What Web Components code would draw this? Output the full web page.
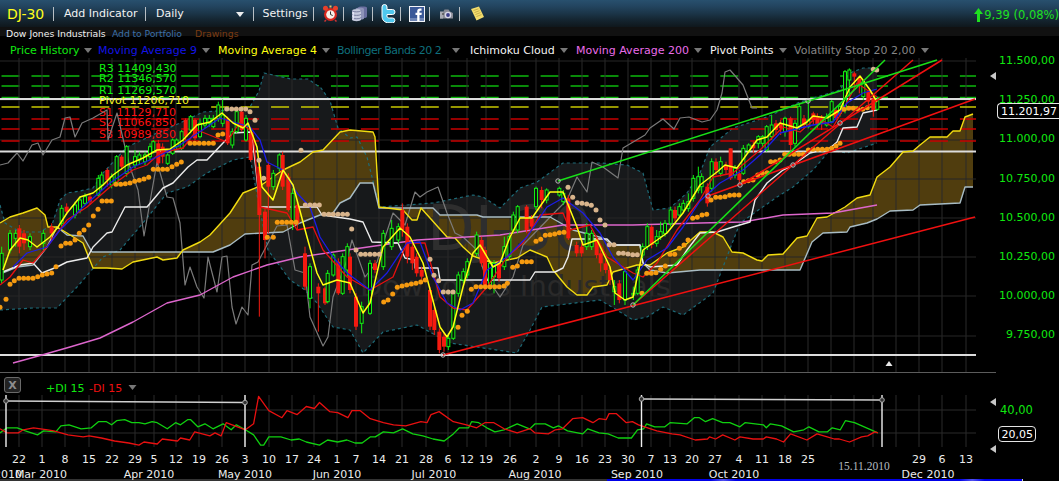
<!DOCTYPE html>
<html>
<head>
<meta charset="utf-8">
<title>DJ-30</title>
<style>
  html, body { margin: 0; padding: 0; background: #000; overflow: hidden; }
  body { font-family: "DejaVu Sans", sans-serif; font-size: 11px; }
</style>
</head>
<body>
<chart-app></chart-app>

<script>
const FONT = '"DejaVu Sans", sans-serif';

// svg helpers, all coordinates are page pixels
const pts = a => a.map(p => p.join(',')).join(' ');
const line = (a, color, w = 1.2, extra = '') =>
  `<polyline points="${pts(a)}" fill="none" stroke="${color}" stroke-width="${w}" stroke-linejoin="round" ${extra}/>`;
const seg = (x1, y1, x2, y2, color, w = 1, extra = '') =>
  `<line x1="${x1}" y1="${y1}" x2="${x2}" y2="${y2}" stroke="${color}" stroke-width="${w}" ${extra}/>`;
const label = (x, y, s, color, extra = '') =>
  `<text x="${x}" y="${y}" fill="${color}" ${extra}>${s}</text>`;

class ToolItem extends HTMLElement {
  connectedCallback() {
    this.attachShadow({ mode: 'open' });
    const w = this.getAttribute('w');
    const pad = this.getAttribute('pad');
    const last = this.hasAttribute('last');
    this.shadowRoot.innerHTML = `
      <style>
        :host {
          display: flex; align-items: center; box-sizing: border-box; height: 14px;
          width: ${w}px; flex: none; white-space: nowrap;
          ${pad ? `padding-left: ${pad}px;` : 'justify-content: center; padding-left: 4px;'}
          ${last ? '' : 'border-right: 1px solid #b8bfc4;'}
        }
      </style>
      <slot></slot>`;
  }
}

class ChartToolbar extends HTMLElement {
  connectedCallback() {
    this.attachShadow({ mode: 'open' });
    this.shadowRoot.innerHTML = `
      <style>
        :host {
          display: flex; align-items: center; height: 27px; box-sizing: border-box;
          background: linear-gradient(#28506e 0, #234560 22%, #1b3548 50%, #14242f 75%, #0f171c 100%);
          color: #f2f2f2; font: 11px ${FONT};
        }
        .sym { color: #ffff1a; font-size: 14px; }
        .tri { width: 0; height: 0; border: 4px solid transparent; border-top: 5px solid #eee; border-bottom: 0; margin-left: 52px; margin-top: 1px; }
        .change { margin-left: auto; display: flex; align-items: center; gap: 1px; color: #1fe01f; font-size: 11.5px; white-space: nowrap; padding-top: 2px; }
        svg { display: block; }
      </style>
      <tool-item w="54" pad="7"><span class="sym">DJ-30</span></tool-item>
      <tool-item w="92" pad="10">Add Indicator</tool-item>
      <tool-item w="107.5" pad="10">Daily<span class="tri"></span></tool-item>
      <tool-item w="60.5" pad="9">Settings</tool-item>
      <tool-item w="30">
        <svg width="17" height="17" viewBox="0 0 17 17">
          <path d="M4 15l-1.500 1.500M13 15l1.500 1.500" stroke="#c33" stroke-width="1.500"/>
          <circle cx="8.500" cy="9.500" r="6.500" fill="#d8261c"/>
          <circle cx="8.500" cy="9.500" r="4.300" fill="#f4f1e8"/>
          <path d="M8.500 6.500v3l2.200 1" fill="none" stroke="#333" stroke-width="1"/>
          <circle cx="3.500" cy="3.300" r="2.500" fill="#e8402a"/><circle cx="13.500" cy="3.300" r="2.500" fill="#e8402a"/>
          <rect x="7.500" y="0.500" width="2" height="2" fill="#e9c86a"/>
        </svg>
      </tool-item>
      <tool-item w="28.5">
        <svg width="17" height="17" viewBox="0 0 17 17">
          <path d="M7 2.500c0-1.500 9-1.500 9 0v9c0 1.200-2 1.500-3 1.500z" fill="#6a6fa0"/>
          <path d="M4.500 3.800c0-1.500 8.500-1.500 8.500 0v9.500c0 1.200-3 1.500-5 1.500z" fill="#8d93b8"/>
          <path d="M1 5.500c0-1.800 9-1.800 9 0v9.300c0 1.800-9 1.800-9 0z" fill="#c5cadd"/>
          <path d="M1 5.500c0 1.800 9 1.800 9 0M1 9c0 1.800 9 1.800 9 0M1 12.400c0 1.800 9 1.800 9 0" fill="none" stroke="#61668c" stroke-width=".8"/>
          <path d="M2.200 7v7.500" stroke="#eef" stroke-width="1"/>
        </svg>
      </tool-item>
      <tool-item w="28.500">
        <svg width="15" height="19" viewBox="0 0 15 19">
          <path d="M1 3a2.500 2.500 0 0 1 5 0v2.500h5.500a2.500 2.500 0 0 1 0 5H6V12c0 1.500 1 2 2.500 2h3a2.400 2.400 0 0 1 0 4.800H8C3.500 18.800 1 16 1 12z" fill="#4fc8ee" stroke="#fff" stroke-width="1"/>
        </svg>
      </tool-item>
      <tool-item w="29">
        <svg width="16" height="16" viewBox="0 0 16 16">
          <rect x=".5" y=".5" width="15" height="15" fill="#3b5998" stroke="#f2f4f8"/>
          <rect x="1" y="12" width="14" height="3" fill="#6d84b4"/>
          <path d="M8.200 15V9H6.500V6.800h1.700V5.300C8.200 3.400 9.300 2.600 11 2.600h1.500v2.200h-1c-.8 0-1 .3-1 1v1h2.300L12.500 9h-2v6z" fill="#fff"/>
        </svg>
      </tool-item>
      <tool-item w="30">
        <svg width="15" height="12" viewBox="0 0 15 12">
          <path d="M1 4h3l1.500-2.500h4L11 3.500 14 5v5.500H1z" fill="#8a8c96"/>
          <rect x="1" y="3.500" width="3" height="7" fill="#a8aab2"/>
          <circle cx="9" cy="7" r="3.300" fill="#d8d8e8"/><circle cx="9" cy="7" r="1.900" fill="#3c3e88"/>
          <circle cx="4" cy="6" r="1" fill="#555"/>
        </svg>
      </tool-item>
      <tool-item w="30" last>
        <svg width="15" height="15" viewBox="0 0 15 15">
          <path d="M1 3l8-2.500 5 10.500-7.500 3.500z" fill="#f3dc6c"/>
          <path d="M3.500 4.500l5-1.700M4.500 6.500l5-1.800M5.500 8.500l5-1.900M6.500 10.500l5-1.900" stroke="#b09a3c" stroke-width=".7"/>
        </svg>
      </tool-item>
      <span class="change">
        <svg width="9" height="14" viewBox="0 0 9 14"><path d="M4.500 0L9 6H6v8H3V6H0z" fill="#1fe01f"/></svg>
        9,39 (0,08%)
      </span>`;
  }
}

class ChartSubbar extends HTMLElement {
  connectedCallback() {
    this.attachShadow({ mode: 'open' });
    this.shadowRoot.innerHTML = `
      <style>
        :host {
          display: flex; align-items: center; height: 9px; box-sizing: border-box;
          padding: 4px 0 0 6px; background: #111; font: 9.3px ${FONT}; white-space: nowrap;
        }
        .name { color: #f0f0f0; width: 106px; flex: none; }
        .add { color: #3a6fa8; width: 83px; flex: none; letter-spacing: -.1px; }
        .draw { color: #7c3c12; }
      </style>
      <span class="name">Dow Jones Industrials</span>
      <span class="add">Add to Portfolio</span>
      <span class="draw">Drawings</span>`;
  }
}

class LegendItem extends HTMLElement {
  connectedCallback() {
    this.attachShadow({ mode: 'open' });
    const color = this.getAttribute('color');
    this.shadowRoot.innerHTML = `
      <style>
        :host {
          display: flex; align-items: center; gap: var(--gap, 5px); flex: none; box-sizing: border-box;
          width: ${this.getAttribute('w')}px; color: ${color}; white-space: nowrap;
        }
        i { width: 0; height: 0; border: 4px solid transparent; border-top: 5px solid #777; border-bottom: 0; }
      </style>
      <slot></slot><i></i>`;
  }
}

class ChartLegend extends HTMLElement {
  connectedCallback() {
    this.attachShadow({ mode: 'open' });
    this.shadowRoot.innerHTML = `
      <style>
        :host {
          display: flex; align-items: center; height: 22px; box-sizing: border-box;
          padding: 6px 0 0 10px; background: #000; font: 11px ${FONT};
        }
      </style>
      <slot></slot>`;
  }
}

// trace of the price panel
const UPPER = [[0,205],[5,223],[20,232],[40,232],[52,225],[60,200],[67,193],[80,191],[93,188],[103,173],[127,147],[157,133],[180,123],[203,112],[230,110],[250,107],[259,91],[264,73],[291,79],[308,79],[321,88],[330,101],[338,128],[350,138],[357,137],[367,157],[377,197],[380,207],[433,203],[473,195],[483,197],[500,208],[520,188],[537,182],[563,163],[573,163],[600,163],[627,165],[643,173],[653,210],[670,208],[687,193],[700,173],[710,147],[733,128],[767,117],[800,102],[840,90],[850,73],[863,68],[877,68]];
const LOWER = [[0,310],[33,308],[57,308],[77,287],[103,257],[120,250],[143,223],[167,193],[187,187],[207,173],[233,160],[250,157],[258,200],[268,250],[290,280],[305,290],[317,303],[333,327],[350,330],[363,353],[383,332],[417,325],[450,343],[517,353],[530,330],[542,307],[600,300],[617,310],[633,320],[647,317],[663,307],[683,315],[713,293],[723,267],[740,223],[777,197],[793,187],[813,170],[830,150],[847,153],[877,143]];
const SPAN_A = [[0,223],[10,217],[23,213],[37,208],[45,215],[48,227],[57,227],[67,233],[83,243],[93,268],[107,268],[122,269],[133,262],[157,257],[163,260],[177,258],[183,250],[200,242],[210,235],[230,213],[243,193],[260,186],[283,170],[300,162],[313,152],[323,150],[340,132],[350,130],[373,132],[375,137],[379,207],[403,210],[412,220],[417,220],[421,208],[430,218],[447,237],[455,238],[463,247],[473,256],[493,263],[517,258],[530,250],[547,257],[553,270],[567,287],[577,295],[587,295],[593,287],[607,285],[613,272],[637,265],[650,265],[667,253],[683,247],[700,232],[713,232],[723,237],[732,252],[743,253],[757,260],[762,261],[768,255],[783,254],[797,238],[807,236],[817,218],[827,217],[845,207],[857,198],[870,195],[877,177],[890,167],[903,152],[913,151],[920,145],[930,137],[947,137],[953,131],[960,131],[965,117],[973,114]];
const SPAN_B = [[0,274],[17,267],[33,265],[47,247],[57,227],[67,235],[83,236],[92,252],[213,252],[230,245],[245,234],[283,232],[300,223],[320,215],[333,213],[340,203],[350,198],[360,183],[373,183],[379,208],[433,208],[440,215],[477,215],[483,217],[550,217],[573,230],[603,238],[613,245],[640,245],[643,263],[650,270],[667,273],[700,270],[800,270],[812,242],[823,233],[847,232],[850,227],[867,223],[877,219],[890,211],[913,210],[920,205],[960,203],[965,187],[973,187]];
const WHITE = [[0,273],[20,265],[33,263],[42,273],[57,267],[67,262],[87,258],[93,247],[107,233],[112,232],[125,207],[147,207],[163,188],[173,183],[188,167],[197,160],[207,160],[223,143],[233,133],[250,132],[253,143],[260,207],[317,207],[322,215],[350,219],[363,222],[372,242],[398,243],[405,258],[415,260],[415,268],[438,268],[440,280],[530,280],[535,272],[555,272],[563,268],[568,257],[572,239],[607,239],[613,245],[640,245],[643,263],[650,267],[677,265],[687,250],[700,233],[717,232],[733,227],[750,222],[755,200],[767,183],[783,170],[793,165],[810,153],[830,148],[837,142],[843,128],[857,127],[863,113],[877,110]];
const GRAY = [[0,165],[8,163],[17,153],[23,161],[32,145],[38,143],[43,155],[52,140],[60,137],[65,118],[70,117],[75,137],[82,123],[93,118],[107,110],[108,140],[117,113],[125,147],[130,167],[138,190],[144,236],[157,162],[167,197],[173,198],[180,223],[185,285],[190,267],[197,287],[204,298],[208,257],[217,292],[222,257],[227,256],[232,307],[236,324],[242,307],[248,315],[252,265],[258,262],[277,226],[287,225],[295,270],[305,273],[310,317],[323,346],[328,337],[333,297],[347,260],[352,240],[365,277],[377,262],[393,213],[405,225],[415,192],[420,197],[427,192],[438,187],[447,213],[455,233],[463,237],[477,250],[485,275],[500,297],[513,277],[523,245],[557,210],[567,200],[577,177],[587,192],[592,162],[603,167],[618,178],[623,148],[645,135],[650,128],[663,119],[674,129],[680,118],[689,117],[702,122],[710,120],[717,110],[722,93],[725,72],[730,70],[737,78],[743,85],[752,108],[757,108]];
const MAGENTA = [[13,363],[42,355],[70,347],[100,338],[133,322],[167,303],[200,295],[233,277],[267,265],[300,257],[347,250],[417,240],[500,235],[563,225],[633,225],[700,223],[743,222],[783,215],[833,213],[877,205]];
const YELLOW = [[3,270],[10,250],[20,238],[28,240],[37,247],[50,237],[58,227],[67,213],[80,197],[93,193],[103,185],[113,175],[127,165],[143,158],[157,150],[170,149],[183,140],[197,125],[210,122],[222,113],[233,123],[243,128],[248,123],[257,147],[262,187],[273,200],[283,170],[293,185],[307,237],[317,273],[323,285],[337,280],[350,283],[363,313],[370,303],[383,247],[400,228],[410,237],[423,263],[440,327],[447,337],[453,327],[463,287],[473,253],[480,245],[493,267],[500,263],[510,237],[520,218],[532,218],[550,192],[563,192],[577,227],[583,245],[597,240],[610,267],[615,293],[625,300],[633,297],[643,250],[667,233],[683,213],[700,185],[717,172],[725,165],[737,168],[757,140],[767,137],[780,123],[797,128],[807,122],[813,116],[827,118],[840,110],[850,87],[860,76],[870,90],[877,102]];
const BLUE = [[13,267],[27,253],[47,247],[60,230],[83,207],[110,183],[133,167],[157,157],[180,145],[207,127],[220,118],[250,127],[260,140],[267,162],[283,170],[297,193],[310,207],[320,237],[333,257],[347,273],[370,290],[387,273],[407,243],[420,242],[433,277],[447,303],[460,310],[473,303],[487,270],[507,257],[527,237],[547,207],[563,198],[583,213],[600,233],[613,257],[633,280],[647,260],[667,248],[683,227],[700,201],[720,183],[743,170],[760,155],[780,133],[800,128],[813,125],[833,122],[847,103],[863,93],[877,89]];
const RED_MA = [[0,285],[10,277],[23,260],[33,263],[47,247],[67,220],[87,207],[110,187],[133,170],[147,165],[160,153],[183,148],[197,130],[227,142],[240,122],[253,133],[260,207],[287,213],[297,230],[313,227],[323,250],[347,277],[370,290],[393,277],[407,243],[425,243],[440,297],[453,308],[467,310],[487,287],[507,257],[523,243],[540,215],[563,213],[570,230],[590,225],[607,257],[633,273],[643,277],[657,263],[677,230],[700,200],[713,177],[733,173],[760,150],[783,127],[800,132],[817,117],[833,127],[843,110],[857,83],[877,97]];

// dots read off three crops: [left, top, list of crop x,y at 3x]
const ORANGE = [
  [0, 90, [[0,652],[18,628],[30,583],[43,572],[57,565],[71,565],[85,565],[99,565],[113,560],[127,555],[141,552],[155,549],[168,530],[183,468],[197,460],[211,460],[225,450],[238,430],[252,420],[266,405],[280,378],[294,358],[306,333],[320,333],[334,333],[348,283],[362,283],[376,281],[390,279],[404,274],[418,271],[432,267],[446,262],[460,238],[474,238],[488,238],[502,238],[516,230],[530,223],[544,216],[570,160],[584,160],[598,160],[612,160],[626,160],[640,160],[654,135],[668,132],[802,442],[820,442],[832,397],[846,397],[860,397],[874,397],[888,397]]],
  [350, 130, [[101,516],[114,510],[128,492],[142,472],[156,468],[170,465],[184,462],[198,460],[212,456],[226,450],[364,478],[378,470],[392,470],[406,470],[420,470],[434,470],[448,470],[462,468],[472,460],[488,412],[502,408],[516,395],[530,395],[544,395],[558,334],[572,328],[586,316],[600,314],[614,312],[628,308],[642,307],[324,592],[336,556],[352,544],[876,490],[890,430],[904,430],[918,428],[932,418],[946,408],[960,373],[974,373],[988,355],[1002,345],[1014,330],[1028,265],[1042,262]]],
  [700, 60, [[6,465],[20,463],[33,420],[47,412],[61,412],[75,410],[89,406],[103,405],[117,405],[131,365],[145,362],[159,360],[173,345],[187,340],[201,338],[212,305],[226,305],[240,300],[254,283],[268,283],[282,283],[296,283],[310,283],[325,270],[339,268],[353,268],[367,268],[381,268],[395,265],[408,258],[420,250],[432,148],[446,145],[460,145],[474,148],[488,148],[502,143]]]
];
const TAN = [
  [0, 90, [[680,57],[695,57],[709,57],[723,57],[737,57],[750,65],[765,91],[777,211],[791,265],[903,181],[916,345],[930,345],[944,345],[958,345],[972,373],[986,373],[1000,373],[1014,373],[1028,373],[1042,373]]],
  [350, 130, [[5,297],[18,360],[32,373],[46,373],[60,373],[74,373],[88,373],[240,388],[252,436],[266,452],[280,486],[295,486],[309,486],[654,172],[668,202],[682,218],[696,220],[710,222],[724,226],[738,240],[750,270],[765,285],[778,344],[792,344],[806,370],[820,370],[834,372],[848,374],[862,374]]],
  [700, 60, [[520,28],[530,30]]]
];

// candles: x, body top, body bottom, g or r, wick top, wick bottom (crop pixels at 3x)
const CANDLES = [
  [0, 90, [[5,490,570,'g',470,580],[30,430,480,'g',420,490],[47,430,445,'g',420,470],[58,415,470,'r',405,490],[72,430,460,'r',420,480],[90,440,470,'g',430,480],[130,430,460,'g',420,480],[155,410,430,'r',400,450],[185,355,400,'g',345,410],[200,350,365,'r',340,375],[225,345,375,'g',335,385],[240,330,360,'g',320,370],[255,320,340,'g',310,345],[270,320,335,'r',310,345],[295,265,315,'g',255,320],[305,255,285,'g',245,300],[322,240,270,'r',235,290],[335,260,285,'g',250,295],[350,200,280,'g',195,285],[365,200,230,'r',195,240],[380,170,250,'g',165,260],[405,200,225,'g',180,235],[418,195,210,'g',185,225],[435,195,215,'g',185,225],[450,170,200,'g',160,210],[460,155,185,'g',150,190],[475,160,220,'r',150,225],[488,170,200,'r',160,220],[503,195,220,'g',190,225],[518,150,190,'g',145,195],[530,150,170,'g',145,180],[545,125,175,'g',120,180],[557,90,140,'r',85,150],[572,80,120,'g',75,130],[585,90,145,'r',85,150],[600,100,140,'g',85,145],[615,85,105,'g',75,115],[628,85,100,'g',75,110],[640,85,110,'g',75,115],[655,45,85,'g',35,95],[668,75,100,'g',28,110],[683,90,160,'r',80,165],[697,125,165,'g',115,175],[710,65,125,'g',55,130],[725,65,120,'r',60,125],[738,85,150,'g',75,155],[752,130,210,'r',120,215],[778,230,375,'r',210,680],[795,365,450,'r',355,505],[805,225,290,'r',215,430],[820,250,290,'g',240,300],[838,195,235,'g',190,245],[848,195,290,'r',185,300],[865,260,360,'r',250,365],[878,310,395,'g',295,420],[892,345,400,'r',335,420],[915,490,590,'r',470,600],[930,530,625,'g',520,655],[955,590,610,'r',580,725],[975,595,640,'r',590,645],[983,550,635,'g',540,640],[1000,495,555,'g',490,560],[1015,515,610,'r',505,615],[1028,500,610,'g',490,615],[1042,470,540,'g',460,560]]],
  [350, 130, [[0,380,480,'r',370,490],[18,500,590,'r',490,600],[35,530,580,'g',515,610],[60,400,550,'g',390,555],[75,400,420,'r',390,430],[100,310,410,'g',300,420],[125,295,350,'g',270,360],[145,290,330,'g',280,340],[157,240,300,'r',220,320],[172,290,380,'r',280,400],[187,350,400,'r',340,420],[200,380,430,'r',370,440],[215,420,440,'r',410,450],[240,480,590,'r',470,600],[253,540,600,'r',530,615],[268,605,660,'r',595,670],[282,620,650,'r',610,665],[295,625,650,'g',610,660],[310,490,625,'g',480,630],[325,435,490,'g',425,500],[340,425,450,'g',415,460],[352,395,435,'g',385,445],[380,315,370,'g',305,380],[395,330,400,'r',320,410],[405,360,470,'r',350,480],[420,400,470,'g',390,480],[432,400,440,'g',390,490],[447,400,445,'r',390,455],[463,350,410,'g',320,420],[478,320,380,'g',310,390],[490,255,300,'g',245,310],[503,230,300,'g',225,310],[530,230,300,'r',225,310],[545,265,290,'r',255,300],[558,175,230,'g',170,240],[575,180,210,'r',170,235],[590,180,210,'g',175,220],[628,175,195,'g',170,200],[640,190,215,'g',180,225],[655,205,325,'r',195,330],[680,345,370,'r',335,380],[695,350,370,'r',340,380],[710,310,350,'g',280,360],[725,310,350,'g',300,360],[740,330,375,'r',320,385],[752,370,400,'r',360,425],[767,400,420,'r',390,430],[780,420,450,'r',410,465],[793,470,485,'g',450,525],[808,460,510,'r',450,520],[825,425,510,'g',415,525],[850,490,495,'g',470,510],[863,420,490,'g',410,495],[878,350,375,'g',340,385],[892,290,350,'g',280,360],[905,290,345,'r',285,355],[920,320,340,'g',300,350],[932,305,320,'g',275,330],[945,280,310,'g',270,320],[962,240,280,'g',230,290],[975,240,265,'r',230,275],[988,230,255,'g',220,265],[1000,220,240,'g',210,250],[1015,215,235,'g',190,245],[1030,145,205,'g',135,215],[1045,140,180,'g',110,190]]],
  [700, 60, [[5,350,380,'g',340,400],[22,380,430,'r',370,440],[35,305,385,'g',295,395],[48,305,330,'r',295,345],[62,305,340,'g',290,350],[78,315,330,'r',305,345],[92,265,355,'r',265,360],[105,325,345,'g',315,355],[118,340,360,'r',330,370],[130,265,340,'g',255,345],[146,255,272,'g',250,280],[160,255,265,'r',245,280],[175,230,250,'g',225,265],[188,230,250,'g',225,260],[200,200,270,'g',195,275],[215,195,230,'g',165,240],[228,190,210,'r',180,225],[242,190,205,'r',180,225],[255,175,215,'g',170,230],[272,175,255,'r',170,270],[285,190,250,'g',180,260],[298,140,200,'g',130,210],[312,175,195,'r',165,205],[325,180,200,'g',125,205],[340,160,180,'r',155,195],[352,170,195,'r',160,205],[365,175,190,'r',165,210],[380,170,195,'g',160,200],[395,125,185,'g',120,190],[408,150,175,'r',145,180],[420,140,160,'g',130,170],[435,35,150,'g',30,160],[448,30,60,'g',25,110],[463,40,50,'r',35,80],[478,55,75,'r',50,100],[490,70,110,'g',60,120],[505,95,125,'r',90,135],[520,115,150,'r',105,170],[532,118,148,'g',110,152]]]
];

const GRID_X = [19,42,65,89,112,135,154,176,199,222,245,269,292,314,337,356,379,402,426,448,467,486,510,536,559,582,605,628,651,670,692,715,739,762,785,808,831,854,873,896,919,942,966];

function dots(groups, color, r) {
  return groups.map(([l, t, list]) => list.map(([x, y]) =>
    `<circle cx="${(l + x / 3).toFixed(1)}" cy="${(t + y / 3).toFixed(1)}" r="${r}" fill="${color}"/>`).join('')).join('');
}

function candles() {
  return CANDLES.map(([l, t, list]) => list.map(([x, top, bot, c, wt, wb]) => {
    const cx = l + x / 3, y1 = t + top / 3, y2 = t + bot / 3;
    const color = c === 'g' ? '#12f012' : '#f51a10';
    const wick = seg(cx, t + wt / 3, cx, t + wb / 3, color);
    return wick + (c === 'g'
      ? `<rect x="${cx - 1.5}" y="${y1}" width="3" height="${y2 - y1}" fill="#0a120a" stroke="${color}" stroke-width="1"/>`
      : `<rect x="${cx - 2}" y="${y1}" width="4" height="${y2 - y1}" fill="${color}"/>`);
  }).join('')).join('');
}

class PricePlot extends HTMLElement {
  connectedCallback() {
    this.attachShadow({ mode: 'open' });
    const grid = GRID_X.map(x => seg(x, 58, x, 372, '#2b2b2b')).join('') +
      [61, 100, 140, 179, 218, 257, 296, 336].map(y => seg(0, y, 976, y, '#262626')).join('');
    const level = (y, color) => seg(1.5, y, 976, y, color, 1.6, 'stroke-dasharray="18 11.95"');
    const anchors = [[443,355],[633,305],[558,181],[708,196],[740,185],[793,165],[840,123],[808,101]]
      .map(([x, y]) => `<circle cx="${x}" cy="${y}" r="2.200" fill="none" stroke="#bbb" stroke-width="1"/>`).join('');
    const band = UPPER.concat(LOWER.slice().reverse());
    const cloud = SPAN_A.concat(SPAN_B.slice().reverse());
    this.shadowRoot.innerHTML = `
      <style>
        :host { display: block; flex: none; width: 999px; height: 314px; }
        svg { display: block; font: 11px ${FONT}; }
      </style>
      <svg width="999" height="314" viewBox="0 58 999 314">
        ${level(76, '#0cb80c')}${level(86, '#0cb80c')}${level(97.5, '#0cb80c')}
        <polygon points="${pts(band)}" fill="#17191b"/>
        <polygon points="${pts(cloud)}" fill="#54400f" fill-opacity=".95"/>
        ${grid}
        <text x="427" y="250" font-size="62" fill="#2e2e2e">DJ-30</text>
        <text x="360" y="296" font-size="29" fill="#2a2a2a">Dow Jones Industrials</text>
        ${line(UPPER, '#1d6b78', 1.2, 'stroke-dasharray="3 3"')}
        ${line(LOWER, '#1d6b78', 1.2, 'stroke-dasharray="3 3"')}
        ${level(107, '#c8c800')}${level(119, '#c80000')}${level(129, '#c80000')}${level(141, '#c80000')}
        ${[99, 151.5, 355].map(y => seg(0, y, 976, y, '#dcdcdc', 2)).join('')}
        ${label(99, 72, 'R3 11409,430', '#10f010')}
        ${label(99, 82, 'R2 11346,570', '#10f010')}
        ${label(99, 94, 'R1 11269,570', '#10f010')}
        ${label(99, 104, 'Pivot 11206,710', '#f4f420')}
        ${label(99, 116, 'S1 11129,710', '#ff1010')}
        ${label(99, 126, 'S2 11066,850', '#ff1010')}
        ${label(99, 138, 'S3 10989,850', '#ff1010')}
        ${line(GRAY, '#7a7a7a', 1.2)}
        ${line(SPAN_B, '#a8bcc4', 1.4)}
        ${line(SPAN_A, '#f2dc10', 1.4)}
        ${line(MAGENTA, '#dd66cc', 1.4)}
        ${line(WHITE, '#ececec', 1.4)}
        ${candles()}
        ${line(RED_MA, '#e81010', 1.3)}
        ${line(BLUE, '#1c1ce6', 1.3)}
        ${line(YELLOW, '#ffff10', 1.5)}
        ${dots(ORANGE, '#f59a10', 2.500)}
        ${dots(TAN, '#d8b48c', 2.500)}
        ${seg(443, 355, 975, 217, '#f01010', 1.5)}
        ${seg(633, 305, 913, 60, '#f01010', 1.5)}
        ${seg(708, 196, 975, 99, '#f01010', 1.5)}
        ${seg(740, 185, 942, 60, '#f01010', 1.5)}
        ${seg(633, 305, 885, 60, '#18e018', 1.5)}
        ${seg(558, 181, 937, 60, '#18e018', 1.5)}
        ${anchors}
        <polygon points="889,361 892.500,366 885.500,366" fill="#e8e8e8"/>
        <polygon points="990,76 996,72 996,80" fill="#c8c8c8"/>
      </svg>`;
  }
}

class AxisValue extends HTMLElement {
  connectedCallback() {
    this.attachShadow({ mode: 'open' });
    this.shadowRoot.innerHTML = `
      <style>
        :host {
          position: absolute; right: 0; top: var(--top); box-sizing: border-box; height: 16px; padding: 0 2px 0 3px;
          display: flex; align-items: center; color: #fff; background: #000; white-space: nowrap;
          border: 1px solid #e4e4e4; border-right-width: var(--edge, 0); border-radius: 4px 0 0 4px; font: 11px ${FONT};
        }
      </style>
      <slot></slot>`;
  }
}

class PriceAxis extends HTMLElement {
  connectedCallback() {
    this.attachShadow({ mode: 'open' });
    const values = ['11.500,00','11.250,00','11.000,00','10.750,00','10.500,00','10.250,00','10.000,00','9.750,00'];
    this.shadowRoot.innerHTML = `
      <style>
        :host { display: block; position: relative; flex: 1; height: 314px; font: 11px ${FONT}; }
        .list { display: flex; flex-direction: column; align-items: flex-end; margin-top: -16.9px; padding-right: 4px; color: #10e810; }
        .list span { height: 39.2px; line-height: 39.2px; }
      </style>
      <div class="list">${values.map(v => `<span>${v}</span>`).join('')}</div>
      <axis-value style="--top:45px">11.201,97</axis-value>`;
  }
}

class PriceChart extends HTMLElement {
  connectedCallback() {
    this.attachShadow({ mode: 'open' });
    this.shadowRoot.innerHTML = `
      <style>:host { display: flex; height: 314px; overflow: visible; }</style>
      <price-plot></price-plot><price-axis></price-axis>`;
  }
}

// the two crops of this panel came back at 2.958x, so stretch the numbers a little
const fixA = a => a.map(([x, y]) => [+(x * 1.0142).toFixed(1), +(370 + (y - 370) * 1.0142).toFixed(1)]);
const fixB = a => a.map(([x, y]) => [+(530 + (x - 530) * 1.0142).toFixed(1), +(370 + (y - 370) * 1.0142).toFixed(1)]);
const DI_PLUS = fixA([[0,432],[7,427],[17,427],[25,430],[37,434],[43,430],[55,431],[60,425],[68,424],[80,428],[90,427],[97,421],[105,421],[110,424],[115,420],[123,419],[130,422],[137,422],[143,423],[150,421],[155,422],[165,428],[173,422],[178,424],[185,419],[188,419],[195,426],[202,423],[210,428],[220,423],[228,429],[233,424],[242,429],[250,434],[257,444],[260,444],[265,436],[277,436],[287,439],[295,438],[302,441],[315,444],[323,439],[333,441],[342,439],[350,442],[357,442],[365,436],[370,436],[378,431],[388,432],[397,428],[407,433],[417,435],[427,438],[438,440],[447,433],[453,427],[462,427],[465,421],[472,422],[480,427],[488,431],[497,429],[510,423],[522,428]])
  .concat(fixB([[530,428],[535,423],[545,423],[553,427],[558,425],[567,430],[582,433],[587,428],[598,432],[607,433],[617,437],[630,437],[636,429],[642,428],[645,423],[653,426],[663,426],[668,422],[685,423],[692,417],[697,417],[703,421],[710,418],[720,422],[727,422],[737,426],[742,422],[760,424],[763,427],[767,423],[778,425],[790,431],[800,429],[805,426],[815,431],[823,431],[828,427],[836,429],[841,420],[850,422],[873,432]]));
const DI_MINUS = fixA([[0,428],[7,432],[18,432],[23,429],[33,427],[47,429],[53,430],[67,434],[82,436],[88,435],[100,437],[113,440],[127,442],[137,444],[142,441],[155,443],[160,438],[175,440],[178,437],[187,439],[192,431],[207,435],[212,432],[218,435],[223,422],[242,429],[250,423],[255,396],[265,410],[278,417],[283,410],[293,414],[302,406],[310,408],[315,402],[325,411],[333,412],[343,417],[347,410],[355,410],[365,418],[378,422],[388,424],[400,425],[415,421],[421,422],[425,414],[433,411],[447,421],[460,424],[470,427],[478,422],[487,422],[497,428],[510,432],[522,428]])
  .concat(fixB([[530,428],[535,432],[548,433],[555,429],[562,428],[572,418],[582,417],[592,422],[598,418],[605,419],[608,413],[615,413],[625,422],[631,421],[637,424],[643,426],[655,430],[670,433],[678,434],[693,439],[705,438],[707,436],[713,438],[720,434],[732,439],[737,436],[750,438],[760,438],[763,436],[773,438],[780,441],[787,433],[803,439],[813,433],[823,436],[830,438],[835,438],[845,441],[857,436],[863,435],[870,431],[873,432]]));

const DAYS = [[19,22],[42,1],[65,8],[89,15],[112,22],[135,29],[154,5],[176,12],[199,19],[222,26],[245,3],[269,10],[292,17],[314,24],[337,1],[356,7],[379,14],[402,21],[426,28],[448,6],[467,12],[486,19],[510,26],[536,2],[559,9],[582,16],[605,23],[628,30],[651,7],[670,13],[692,20],[715,27],[739,4],[762,11],[785,18],[808,25],[919,29],[942,6],[966,13]];
const MONTHS = [[8,'2010'],[41,'Mar 2010'],[149,'Apr 2010'],[245,'May 2010'],[337,'Jun 2010'],[434,'Jul 2010'],[535,'Aug 2010'],[637,'Sep 2010'],[734,'Oct 2010'],[928,'Dec 2010']];

class DiPlot extends HTMLElement {
  connectedCallback() {
    this.attachShadow({ mode: 'open' });
    const cycle = (x1, x2, y1, y2) =>
      seg(x1, y1, x2, y2, '#d0d0d0', 1.6) + seg(x1, 395, x1, 447, '#f0f0f0', 1.4) + seg(x2, 395, x2, 447, '#f0f0f0', 1.4) +
      `<circle cx="${x1}" cy="${y1}" r="2.300" fill="#333" stroke="#aaa"/><circle cx="${x2}" cy="${y2}" r="2.300" fill="#333" stroke="#aaa"/>`;
    this.shadowRoot.innerHTML = `
      <style>
        :host { display: block; flex: none; width: 999px; height: 107px; }
        svg { display: block; overflow: visible; font: 11px ${FONT}; }
      </style>
      <svg width="999" height="107" viewBox="0 372 999 107">
        ${seg(0, 372.5, 996, 372.5, '#5c5c5c', 1)}
        ${GRID_X.map(x => seg(x, 395, x, 447, '#2b2b2b')).join('')}
        ${seg(0, 410, 976, 410, '#2b2b2b')}${seg(0, 433, 976, 433, '#2b2b2b')}
        ${line(DI_PLUS, '#10d010', 1.3)}
        ${line(DI_MINUS, '#e81010', 1.3)}
        ${cycle(6, 245, 401, 402.5)}
        ${cycle(641.5, 882, 399, 400)}
        ${label(46, 392, '+DI 15', '#10e810')}
        ${label(89, 392, '-DI 15', '#f01010')}
        <polygon points="128.500,385 136.500,385 132.500,390" fill="#777"/>
        <polygon points="990,402 996,398 996,406" fill="#c8c8c8"/>
        <polygon points="990,449 996,445 996,453" fill="#c8c8c8"/>
        ${DAYS.map(([x, d]) => label(x, 463, d, '#ececec', 'text-anchor="middle"')).join('')}
        ${MONTHS.map(([x, m]) => label(x, 477.500, m, '#ececec', 'text-anchor="middle"')).join('')}
        <text x="864" y="470" text-anchor="middle" fill="#b4bcc0" font-size="11.500" font-family="'Liberation Serif', serif">15.11.2010</text>
      </svg>`;
  }
}

class CloseButton extends HTMLElement {
  connectedCallback() {
    this.attachShadow({ mode: 'open' });
    this.shadowRoot.innerHTML = `
      <style>
        :host {
          position: absolute; left: 4px; top: 5px; width: 17px; height: 16px; box-sizing: border-box;
          display: flex; align-items: center; justify-content: center;
          border: 1px solid #6a6a6a; border-radius: 3px; background: #222;
          color: #8c8c8c; font: bold 11px ${FONT};
        }
      </style>
      X`;
  }
}

class DiPanel extends HTMLElement {
  connectedCallback() {
    this.attachShadow({ mode: 'open' });
    this.shadowRoot.innerHTML = `
      <style>
        :host { display: flex; position: relative; height: 107px; font: 11px ${FONT}; }
        .axis { position: relative; flex: 1; }
        .val { position: absolute; left: 1px; top: 31px; color: #10e810; font-size: 11.500px; }
      </style>
      <di-plot></di-plot>
      <close-button></close-button>
      <div class="axis">
        <span class="val">40,00</span>
        <axis-value style="--top:54px;--edge:1px;right:23px;border-radius:4px">20,05</axis-value>
      </div>`;
  }
}

class ScrollStrip extends HTMLElement {
  connectedCallback() {
    this.attachShadow({ mode: 'open' });
    this.shadowRoot.innerHTML = `
      <style>
        :host { display: flex; height: 2px; }
        .track { width: 607px; background: #333; }
        .thumb { width: 415px; background: linear-gradient(90deg, #0000e8 25%, #5050f0 28%, #0000e8 31%, #0000e8 85%, #5050f0 88%, #0000e8 91%); border-right: 1px solid #ccc; }
      </style>
      <div class="track"></div><div class="thumb"></div>`;
  }
}

class ChartApp extends HTMLElement {
  connectedCallback() {
    this.attachShadow({ mode: 'open' });
    this.shadowRoot.innerHTML = `
      <style>
        :host { display: block; width: 1059px; height: 481px; background: #000; overflow: hidden; font: 11px ${FONT}; }
      </style>
      <chart-toolbar></chart-toolbar>
      <chart-subbar></chart-subbar>
      <chart-legend>
        <legend-item color="#10e810" w="88">Price History</legend-item>
        <legend-item color="#1414e6" w="120">Moving Average 9</legend-item>
        <legend-item color="#ffff10" w="119">Moving Average 4</legend-item>
        <legend-item color="#0f6f7c" w="133" style="letter-spacing:-.5px;--gap:11px">Bollinger Bands 20 2</legend-item>
        <legend-item color="#f4f4f4" w="106">Ichimoku Cloud</legend-item>
        <legend-item color="#ea6cea" w="134">Moving Average 200</legend-item>
        <legend-item color="#f4f4f4" w="84">Pivot Points</legend-item>
        <legend-item color="#868686" w="150">Volatility Stop 20 2,00</legend-item>
      </chart-legend>
      <price-chart></price-chart>
      <di-panel></di-panel>
      <scroll-strip></scroll-strip>`;
  }
}

customElements.define('tool-item', ToolItem);
customElements.define('chart-toolbar', ChartToolbar);
customElements.define('chart-subbar', ChartSubbar);
customElements.define('legend-item', LegendItem);
customElements.define('chart-legend', ChartLegend);
customElements.define('price-plot', PricePlot);
customElements.define('axis-value', AxisValue);
customElements.define('price-axis', PriceAxis);
customElements.define('price-chart', PriceChart);
customElements.define('di-plot', DiPlot);
customElements.define('close-button', CloseButton);
customElements.define('di-panel', DiPanel);
customElements.define('scroll-strip', ScrollStrip);
customElements.define('chart-app', ChartApp);
</script>
</body>
</html>
